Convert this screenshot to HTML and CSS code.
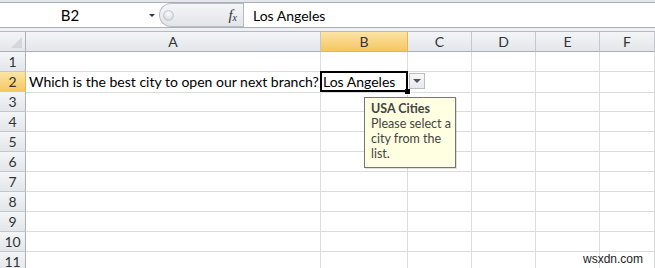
FILE: index.html
```html
<!DOCTYPE html>
<html>
<head>
<title>Data Validation</title>
<link rel="stylesheet" href="styles.css">
</head>
<body>

<div class="ribbon-edge"></div>

<div class="formula-bar">
 <div class="name-box">
  <span class="name-ref">B2</span>
  <span class="name-arrow"></span>
 </div>
 <div class="bar-tools">
  <span class="grip-knob"></span>
  <span class="fx">f<sub>x</sub></span>
 </div>
 <div class="formula-input">Los Angeles</div>
</div>

<div class="bar-gap"></div>

<div class="sheet">
 <div class="row head-row">
  <div class="corner"><span class="corner-tri"></span></div>
  <div class="col-head">A</div>
  <div class="col-head active">B</div>
  <div class="col-head">C</div>
  <div class="col-head">D</div>
  <div class="col-head">E</div>
  <div class="col-head">F</div>
 </div>

 <div class="row">
  <div class="row-head">1</div><div class="cell"></div><div class="cell"></div><div class="cell"></div><div class="cell"></div><div class="cell"></div><div class="cell"></div>
 </div>
 <div class="row">
  <div class="row-head active">2</div>
  <div class="cell">Which is the best city to open our next branch?</div>
  <div class="cell selected">Los Angeles
   <span class="sel-frame"></span>
   <span class="fill-handle"></span>
   <span class="dd-btn"><span class="dd-arrow"></span></span>
   <div class="tip">
    <div class="tip-title">USA Cities</div>
    <div class="tip-text">Please select a<br>city from the<br>list.</div>
   </div>
  </div>
  <div class="cell"></div><div class="cell"></div><div class="cell"></div><div class="cell"></div>
 </div>
 <div class="row">
  <div class="row-head">3</div><div class="cell"></div><div class="cell"></div><div class="cell"></div><div class="cell"></div><div class="cell"></div><div class="cell"></div>
 </div>
 <div class="row">
  <div class="row-head">4</div><div class="cell"></div><div class="cell"></div><div class="cell"></div><div class="cell"></div><div class="cell"></div><div class="cell"></div>
 </div>
 <div class="row">
  <div class="row-head">5</div><div class="cell"></div><div class="cell"></div><div class="cell"></div><div class="cell"></div><div class="cell"></div><div class="cell"></div>
 </div>
 <div class="row">
  <div class="row-head">6</div><div class="cell"></div><div class="cell"></div><div class="cell"></div><div class="cell"></div><div class="cell"></div><div class="cell"></div>
 </div>
 <div class="row">
  <div class="row-head">7</div><div class="cell"></div><div class="cell"></div><div class="cell"></div><div class="cell"></div><div class="cell"></div><div class="cell"></div>
 </div>
 <div class="row">
  <div class="row-head">8</div><div class="cell"></div><div class="cell"></div><div class="cell"></div><div class="cell"></div><div class="cell"></div><div class="cell"></div>
 </div>
 <div class="row">
  <div class="row-head">9</div><div class="cell"></div><div class="cell"></div><div class="cell"></div><div class="cell"></div><div class="cell"></div><div class="cell"></div>
 </div>
 <div class="row">
  <div class="row-head">10</div><div class="cell"></div><div class="cell"></div><div class="cell"></div><div class="cell"></div><div class="cell"></div><div class="cell"></div>
 </div>
 <div class="row">
  <div class="row-head">11</div><div class="cell"></div><div class="cell"></div><div class="cell"></div><div class="cell"></div><div class="cell"></div><div class="cell"></div>
 </div>
</div>

<div class="watermark">wsxdn.com</div>

</body>
</html>
```

FILE: styles.css
```css
body {
 margin: 0;
 width: 655px;
 height: 268px;
 overflow: hidden;
 position: relative;
 background: #fff;
 font-family: Lato, "Liberation Sans", sans-serif;
 color: #000;
}

/* strip of the ribbon above the formula bar */
.ribbon-edge {
 height: 2px;
 background: #e3e6ea;
 border-bottom: 1px solid #a9b0b8;
}

.formula-bar {
 display: flex;
 height: 24px;
 border-bottom: 1px solid #a9b0b8;
 background: #fff;
}
.name-box {
 width: 159px;
 display: flex;
 align-items: center;
 font-size: 15px;
}
.name-ref {
 width: 140px;
 text-align: center;
}
.name-arrow {
 margin-left: 9px;
 width: 0;
 height: 0;
 border-left: 3px solid transparent;
 border-right: 3px solid transparent;
 border-top: 3px solid #333;
}
.bar-tools {
 width: 84px;
 display: flex;
 align-items: center;
 box-sizing: border-box;
 border: 1px solid #b9bec6;
 border-right: none;
 border-radius: 12px 0 0 12px;
 background: linear-gradient(#f4f5f7, #e2e5e9);
}
.grip-knob {
 width: 9px;
 height: 9px;
 margin-left: 3px;
 border-radius: 50%;
 background: radial-gradient(circle at 50% 35%, #fdfdfd, #c9cdd3);
 border: 1px solid #c3c8ce;
}
.fx {
 margin-left: auto;
 margin-right: 6px;
 font-family: "Liberation Serif", serif;
 font-style: italic;
 font-size: 15px;
 color: #333;
}
.fx sub {
 font-size: 10px;
 vertical-align: -1px;
}
.formula-input {
 flex: 1;
 display: flex;
 align-items: center;
 padding-left: 9px;
 border-left: 1px solid #b4bac2;
 font-size: 14px;
}

.bar-gap {
 height: 3px;
 background: #eef0f3;
}

/* grid */
.row {
 display: grid;
 grid-template-columns: 26px 295px 87px 64px 64px 64px 1fr;
 height: 20px;
}
.row > div {
 box-sizing: border-box;
 border-right: 1px solid #dadcdd;
 border-bottom: 1px solid #dadcdd;
}
.head-row {
 border-top: 1px solid #b5bac1;
}
.head-row > div,
.row > .row-head {
 background: linear-gradient(#f3f5f7, #e3e6ea);
 border-right: 1px solid #c3c7cd;
 border-bottom: 1px solid #c3c7cd;
 color: #333;
 font-size: 14px;
 display: flex;
 align-items: center;
 justify-content: center;
}
.head-row > .col-head {
 border-bottom-color: #a9b0b8;
}
.row > .row-head {
 border-right-color: #a9b0b8;
 line-height: 1;
}
.head-row > .corner {
 border-right-color: #a9b0b8;
 border-bottom-color: #a9b0b8;
 position: relative;
}
.corner-tri {
 position: absolute;
 right: 3px;
 bottom: 3px;
 width: 0;
 height: 0;
 border-left: 11px solid transparent;
 border-bottom: 11px solid #d3d7dc;
}
.head-row > .active,
.row > .row-head.active {
 background: linear-gradient(#fbe4a5, #f5c660);
 border-right-color: #e8b54f;
 border-bottom-color: #e8b54f;
}

.cell {
 font-size: 14px;
 line-height: 20px;
 padding-left: 3px;
 white-space: nowrap;
 overflow: visible;
}
.cell.selected {
 position: relative;
 padding-left: 2px;
}
.sel-frame {
 position: absolute;
 left: -1px;
 top: -1px;
 width: 88px;
 height: 21px;
 box-sizing: border-box;
 border: 2px solid #000;
}
.fill-handle {
 position: absolute;
 left: 84px;
 top: 17px;
 width: 5px;
 height: 5px;
 background: #000;
 border: 1px solid #fff;
 border-top: none;
 border-left: none;
}
.dd-btn {
 position: absolute;
 left: 88px;
 top: 1px;
 width: 16px;
 height: 16px;
 box-sizing: border-box;
 border: 1px solid #b8bec6;
 background: linear-gradient(#f8f9fa, #e6e9ed);
 display: flex;
 align-items: center;
 justify-content: center;
}
.dd-arrow {
 width: 0;
 height: 0;
 border-left: 4px solid transparent;
 border-right: 4px solid transparent;
 border-top: 4px solid #555;
}

.tip {
 position: absolute;
 left: 43px;
 top: 25px;
 width: 92px;
 height: 71px;
 box-sizing: border-box;
 padding: 3px 5px 0 6px;
 background: #ffffe1;
 border: 1px solid #767676;
 box-shadow: 1px 1px 0 rgba(0, 0, 0, 0.12);
 font-family: Lato, "Noto Sans", sans-serif;
 font-size: 12.5px;
 line-height: 15px;
 color: #444;
 white-space: nowrap;
}
.tip-title {
 font-weight: bold;
}

.watermark {
 position: absolute;
 right: 12px;
 bottom: 2px;
 font-family: "Liberation Sans", Arial, sans-serif;
 font-size: 12px;
 color: #222;
}
```
